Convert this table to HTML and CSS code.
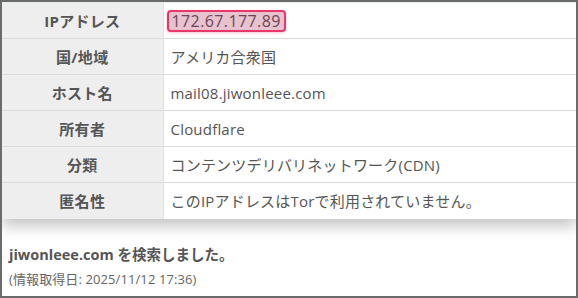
FILE: index.html
```html
<!DOCTYPE html>
<html lang="ja">
<head>
<meta charset="utf-8">
<link rel="stylesheet" href="styles.css">
</head>
<body>
<div class="frame">
  <table class="info">
    <tr><th>IPアドレス</th><td><span class="ip">172.67.177.89</span></td></tr>
    <tr><th>国/地域</th><td>アメリカ合衆国</td></tr>
    <tr><th>ホスト名</th><td>mail08.jiwonleee.com</td></tr>
    <tr><th>所有者</th><td>Cloudflare</td></tr>
    <tr><th>分類</th><td>コンテンツデリバリネットワーク(CDN)</td></tr>
    <tr><th>匿名性</th><td>このIPアドレスはTorで利用されていません。</td></tr>
  </table>
  <div class="note">
    <p class="searched">jiwonleee.com を検索しました。</p>
    <p class="date">(情報取得日: 2025/11/12 17:36)</p>
  </div>
</div>
</body>
</html>
```

FILE: styles.css
```css
* { box-sizing: border-box; }
html, body { margin: 0; padding: 0; background: #fff; }
body {
  font-family: "Open Sans", "Noto Sans CJK JP", sans-serif;
  color: #555;
}
.frame {
  width: 578px;
  height: 298px;
  border: 2px solid #6b6b6b;
  overflow: hidden;
  background: #fff;
}
.info {
  width: 100%;
  border-collapse: collapse;
  box-shadow: 0 7px 14px rgba(0,0,0,0.24);
  font-size: 15px;
}
.info tr { height: 36px; }
.info th, .info td {
  border-top: 1px solid #dcdcdc;
  padding: 0 7px;
  vertical-align: middle;
  line-height: 20px;
}
.info tr:first-child th, .info tr:first-child td { border-top: 1px solid #e4eeee; }
.info th {
  width: 161px;
  background: #eeeeee;
  font-weight: bold;
  text-align: center;
  color: #555;
  letter-spacing: 0.3px;
  border-right: 1px solid #e2e2e2;
}
.info td {
  background: #fff;
  text-align: left;
  font-weight: normal;
  letter-spacing: 0.2px;
}
.ip {
  display: inline-block;
  margin-left: -4px;
  padding: 1px 3px;
  background: #e8c2ce;
  border: 2px solid #e8386a;
  border-radius: 4px;
  color: #6a4656;
  font-size: 16px;
  letter-spacing: 0.4px;
  line-height: 16px;
  box-shadow: 0 1px 3px rgba(232,56,106,0.3);
}
.note {
  padding: 24px 7px 0;
}
.note p { margin: 0; }
.searched {
  font-size: 14.5px;
  font-weight: bold;
  line-height: 24px;
  color: #555;
}
.date {
  font-size: 13px;
  line-height: 24px;
  letter-spacing: 0.1px;
  color: #666;
}
```
